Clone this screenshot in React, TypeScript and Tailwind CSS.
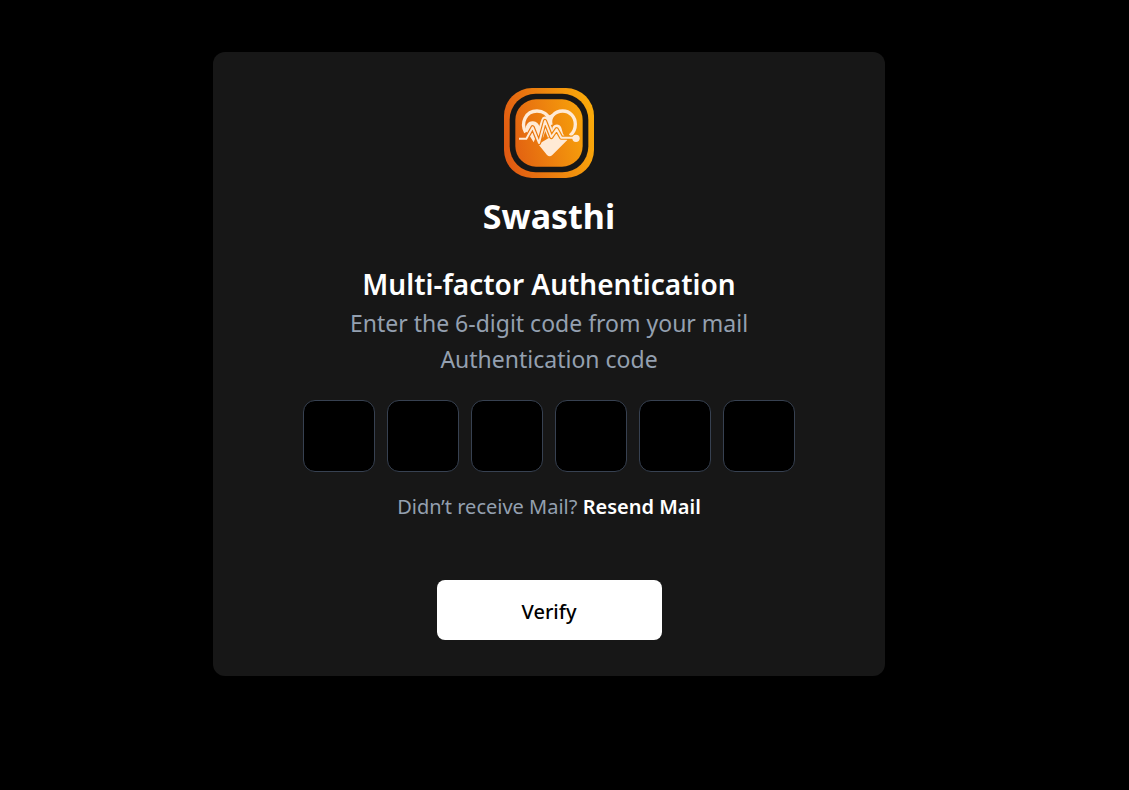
import { useState } from "react";

function Logo() {
  return (
    <svg viewBox="15 15 270 270" className="size-[90px]" role="img" aria-label="Swasthi logo">
      <defs>
        <linearGradient id="brand" gradientUnits="userSpaceOnUse" x1="15" y1="180" x2="285" y2="120">
          <stop offset="0" stopColor="#e05a12" />
          <stop offset="1" stopColor="#faaa0a" />
        </linearGradient>
      </defs>
      <rect x="15" y="15" width="270" height="270" rx="84" fill="url(#brand)" />
      <rect x="32" y="32" width="236" height="236" rx="78" fill="#171717" />
      <rect x="49" y="49" width="202" height="202" rx="62" fill="url(#brand)" />
      <g fill="none" stroke="#ffead5" strokeWidth="10" strokeLinejoin="round">
        <path d="M80 148C64 120 80 84 114 84C132 84 147 94 151 112" />
        <path d="M156 126C150 104 166 84 191 84C213 84 229 102 229 124C229 139 223 150 213 158" />
      </g>
      <path d="M143 92L152 97L161 92L158 112H148Z" fill="#ffead5" />
      <path d="M79 142C80 122 90 114 102 115C113 116 119 123 122 132L120 168H108L104 178L94 162Z" fill="#ffead5" />
      <path d="M118 184L158 160L205 171L160 216Q152 224 144 216Z" fill="#ffead5" />
      <path d="M160 134C165 122 182 121 187 134L192 152L205 171L158 180Z" fill="#ffead5" />
      <g fill="none" strokeLinejoin="round">
        <path d="M122 160L138 112L157 160" stroke="#ffead5" strokeWidth="22" />
        <path d="M60 167H82L101 133L120 180L138 114L157 162L173 139L187 164H222" stroke="url(#brand)" strokeWidth="13" />
        <path d="M60 167H82L101 133L120 180L138 114L157 162L173 139L187 164H222" stroke="#ffead5" strokeWidth="6" />
      </g>
      <circle cx="231" cy="166" r="11" fill="#ffead5" />
    </svg>
  );
}

export default function App() {
  const [code, setCode] = useState<string[]>(["", "", "", "", "", ""]);

  return (
    <main className="flex min-h-screen items-start justify-center bg-black py-13 pr-[31px] font-['Noto_Sans','Open_Sans',sans-serif]">
      <form
        className="flex w-full max-w-2xl flex-col items-center rounded-xl bg-[#171717] p-9 text-center"
        onSubmit={(e) => e.preventDefault()}
      >
        <Logo />
        <h1 className="mt-4 text-[34px] leading-[45px] font-bold text-white">Swasthi</h1>
        <h2 className="mt-6 text-[28px] leading-[42px] font-semibold text-white">Multi-factor Authentication</h2>
        <p className="text-[23px] leading-9 text-[#94a0b0]">Enter the 6-digit code from your mail</p>
        <p className="text-[23px] leading-9 text-[#94a0b0]">Authentication code</p>
        <div className="mt-[23px] flex gap-3">
          {code.map((digit, i) => (
            <input
              key={i}
              type="text"
              inputMode="numeric"
              maxLength={1}
              value={digit}
              aria-label={`Digit ${i + 1}`}
              onChange={(e) => setCode(code.map((d, j) => (j === i ? e.target.value : d)))}
              className="size-18 rounded-xl border border-[#374151] bg-black text-center text-2xl text-white outline-none"
            />
          ))}
        </div>
        <p className="mt-5 text-[20px] leading-[30px] text-[#94a0b0]">
          Didn’t receive Mail?{" "}
          <button type="button" className="font-semibold text-white">
            Resend Mail
          </button>
        </p>
        <button type="submit" className="mt-[58px] h-15 w-[225px] rounded-lg bg-white pt-1 text-[20px] font-medium text-black">
          Verify
        </button>
      </form>
    </main>
  );
}
